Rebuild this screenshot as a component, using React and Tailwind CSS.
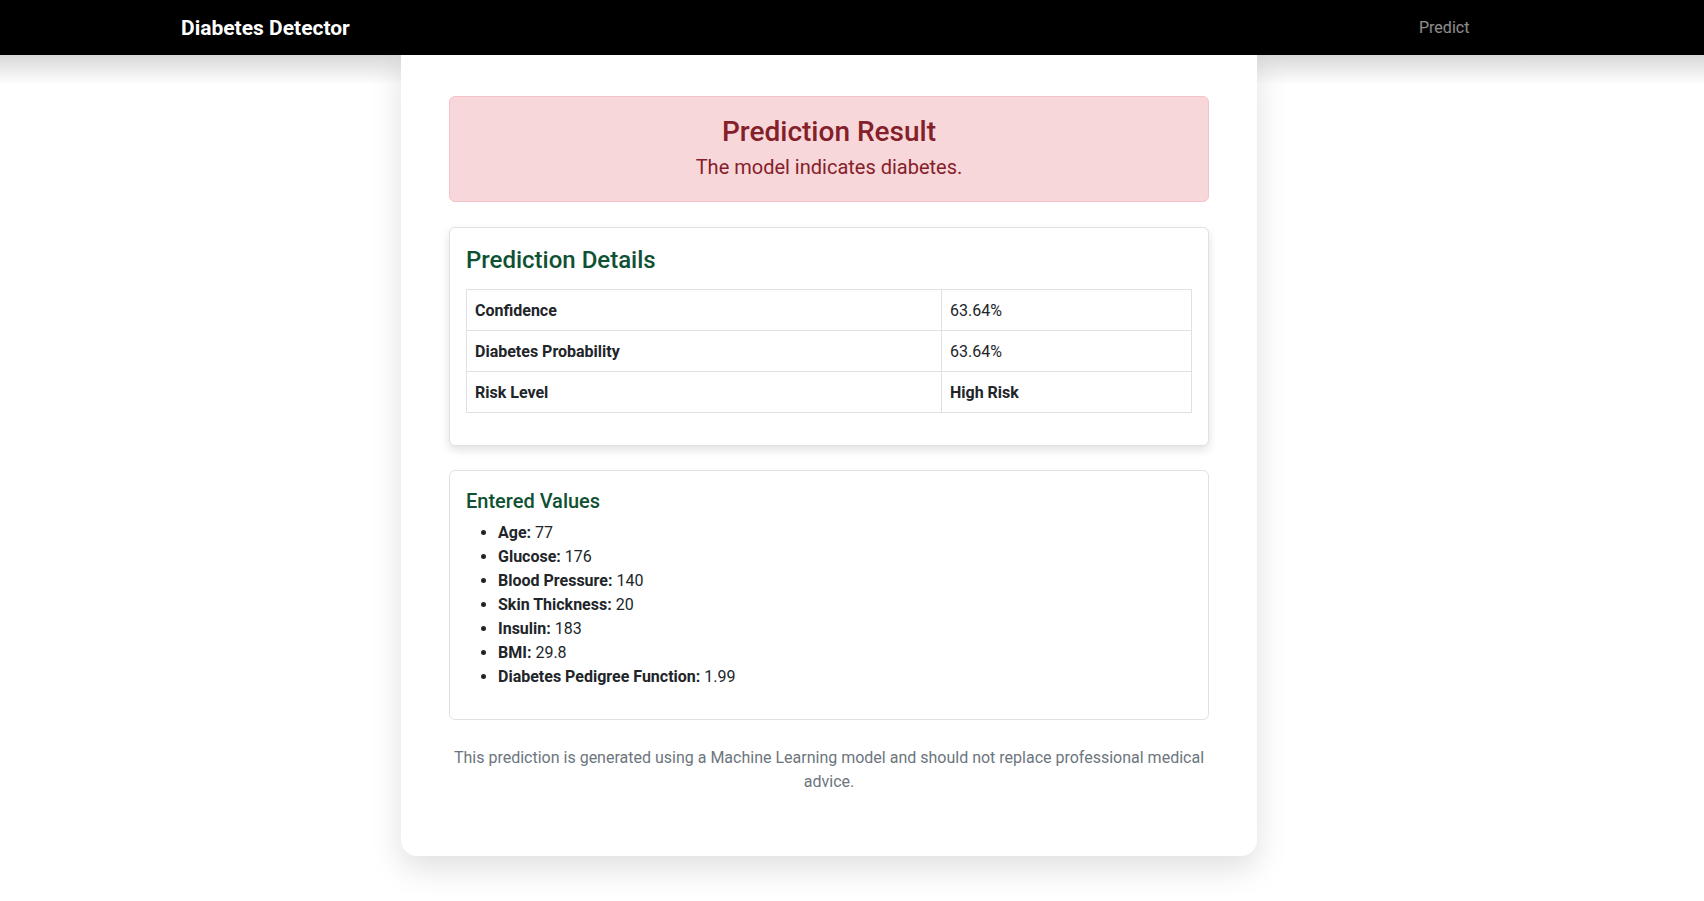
const details = [
  { label: "Confidence", value: "63.64%", strong: false },
  { label: "Diabetes Probability", value: "63.64%", strong: false },
  { label: "Risk Level", value: "High Risk", strong: true },
];

const entered = [
  ["Age", "77"],
  ["Glucose", "176"],
  ["Blood Pressure", "140"],
  ["Skin Thickness", "20"],
  ["Insulin", "183"],
  ["BMI", "29.8"],
  ["Diabetes Pedigree Function", "1.99"],
];

export default function App() {
  return (
    <div className="min-h-screen bg-white font-['Segoe_UI',Roboto,sans-serif] text-[16px] text-[#212529]">
      <nav className="relative z-20 grid h-[55px] grid-cols-[1238px_auto] items-center bg-black pl-[181px]">
        <span className="text-[21px] font-bold leading-[30px] text-white">Diabetes Detector</span>
        <a href="#" className="text-[16px] leading-6 text-white/55">
          Predict
        </a>
      </nav>

      <div className="bg-[linear-gradient(to_bottom,#d9d9d9,#ffffff_30px)] pb-[46px]">
        <main className="relative z-10 ml-[401px] w-[856px] rounded-b-[16px] bg-white px-12 pt-[41px] pb-12 shadow-[0_12px_32px_rgba(0,0,0,0.13)]">
          {/* result banner */}
          <div className="rounded-md border border-[#f5c2c7] bg-[#f8d7da] px-4 pt-[18px] pb-[19px] text-center text-[#842029]">
            <h2 className="mb-[3px] text-[28px] font-medium leading-[34px]">Prediction Result</h2>
            <p className="text-[20px] leading-[30px]">The model indicates diabetes.</p>
          </div>

          {/* details table */}
          <div className="mt-[25px] rounded-md border border-[#dee2e6] bg-white px-4 pt-[18px] pb-4 shadow-[0_4px_10px_rgba(0,0,0,0.12)]">
            <h4 className="mb-[14px] text-[24px] font-medium leading-[29px] text-[#0f5132]">Prediction Details</h4>
            <table className="mb-4 w-full border-collapse">
              <tbody>
                {details.map((row) => (
                  <tr key={row.label}>
                    <th className="w-[475px] border border-[#dee2e6] px-2 pt-[9px] pb-[7px] text-left font-bold leading-6">
                      {row.label}
                    </th>
                    <td
                      className={
                        row.strong
                          ? "border border-[#dee2e6] px-2 pt-[9px] pb-[7px] font-bold leading-6"
                          : "border border-[#dee2e6] px-2 pt-[9px] pb-[7px] leading-6"
                      }
                    >
                      {row.value}
                    </td>
                  </tr>
                ))}
              </tbody>
            </table>
          </div>

          {/* submitted form values */}
          <div className="mt-6 rounded-md border border-[#dee2e6] bg-white px-4 pt-[18px] pb-4">
            <h5 className="mb-2 text-[20px] font-medium leading-6 text-[#0f5132]">Entered Values</h5>
            <ul className="mb-[14px] list-disc pl-8">
              {entered.map(([k, v]) => (
                <li key={k} className="leading-6">
                  <strong className="font-bold">{k}:</strong> {v}
                </li>
              ))}
            </ul>
          </div>

          <p className="mt-[26px] mb-[14px] text-center leading-6 text-[#6c757d]">
            This prediction is generated using a Machine Learning model and should not replace professional medical
            advice.
          </p>
        </main>
      </div>
    </div>
  );
}
